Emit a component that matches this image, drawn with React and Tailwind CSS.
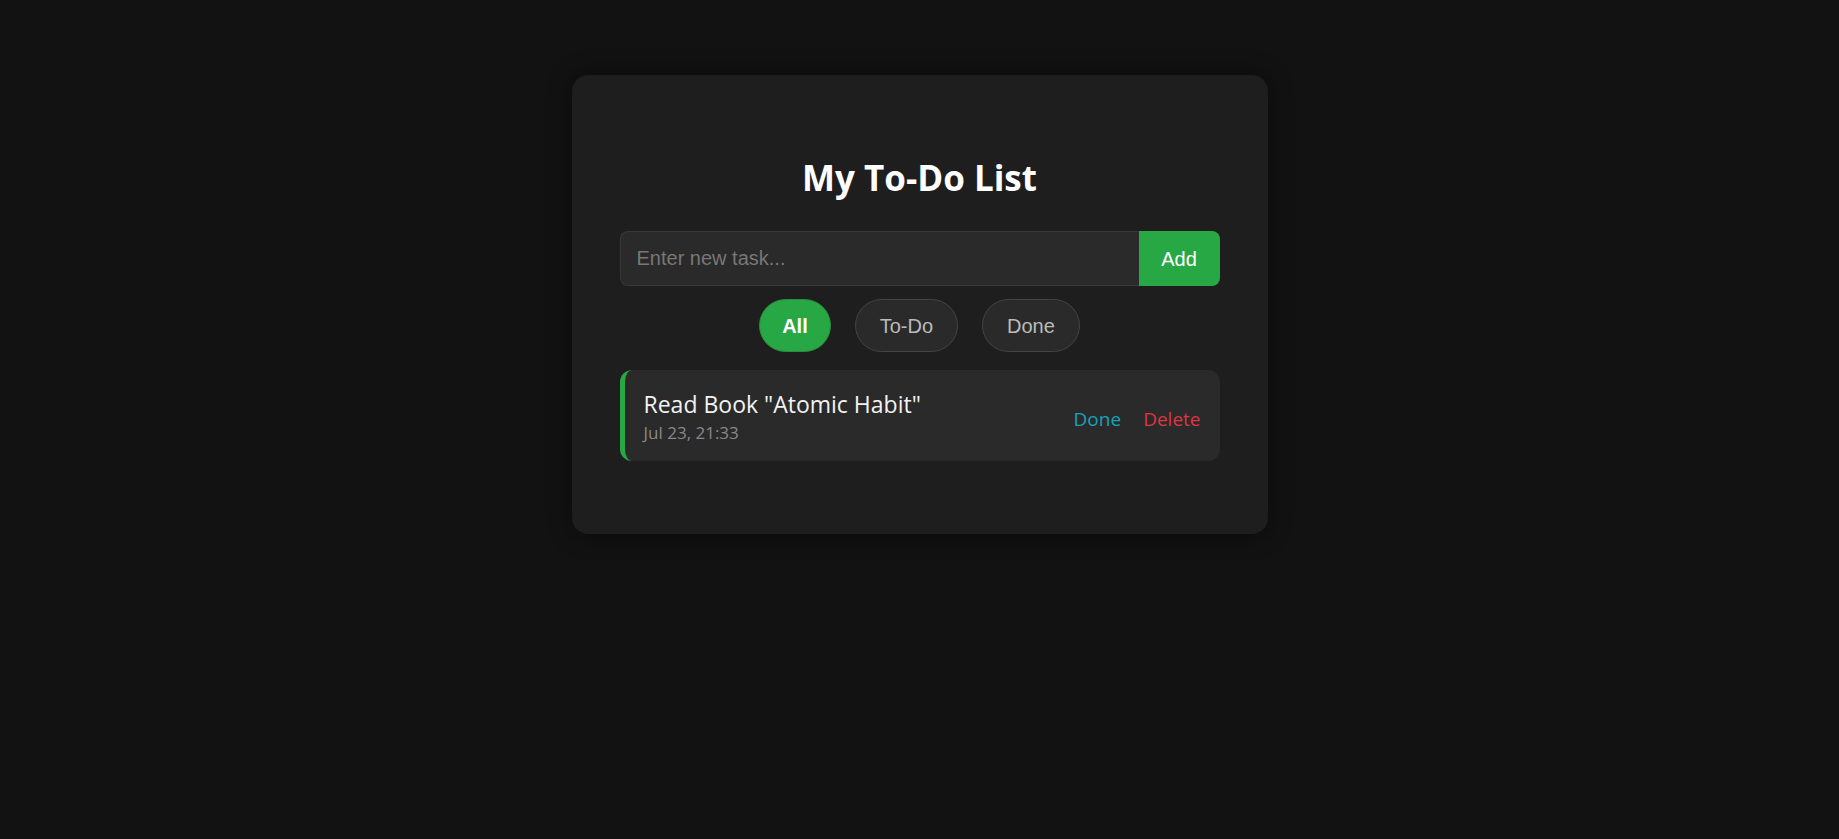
import { useState } from 'react'

// body copy uses a Segoe-like humanist face; form controls keep the Arial look
const uiFont = { fontFamily: '"Open Sans", "Noto Sans", sans-serif' }
const ctlFont = '[font-family:"Liberation_Sans",Arial,sans-serif]'

const FILTERS = ['All', 'To-Do', 'Done']

export default function App() {
  const [filter, setFilter] = useState('All')
  const [text, setText] = useState('')
  const [tasks, setTasks] = useState([
    { id: 1, title: 'Read Book "Atomic Habit"', when: 'Jul 23, 21:33', done: false },
  ])

  const add = () => {
    if (!text.trim()) return
    setTasks(t => [...t, { id: Date.now(), title: text.trim(), when: 'Jul 23, 21:33', done: false }])
    setText('')
  }

  const visible = tasks.filter(t => filter === 'All' || (filter === 'Done' ? t.done : !t.done))

  return (
    <div className="min-h-screen bg-[#121212] flex justify-center items-start pt-[75px]" style={uiFont}>
      <div className="w-[696px] bg-[#1e1e1e] rounded-2xl px-12 pt-12 pb-[73px] shadow-[0_0_24px_rgba(0,0,0,0.45)]">
        <h1 className="mt-[31px] mb-[29px] text-center text-[35px] leading-[48px] font-bold text-white">My To-Do List</h1>

        <div className="flex h-[55px]">
          <input
            value={text}
            onChange={e => setText(e.target.value)}
            onKeyDown={e => e.key === 'Enter' && add()}
            placeholder="Enter new task..."
            className={`flex-1 min-w-0 h-full bg-[#2a2a2a] border border-[#383838] border-r-0 rounded-l-lg pl-4 text-[20px] text-white placeholder:text-[#777] outline-none ${ctlFont}`}
          />
          <button onClick={add} className={`w-[81px] h-full bg-[#28a745] rounded-r-lg text-white text-[20px] ${ctlFont}`}>Add</button>
        </div>

        <div className="flex justify-center gap-6 mt-[13px]">
          {FILTERS.map(f => (
            <button
              key={f}
              onClick={() => setFilter(f)}
              className={`h-[53px] rounded-full border text-[20px] ${ctlFont} ${filter === f ? 'px-[22px] bg-[#28a745] border-[#2d8a3f] text-white font-bold' : 'px-[24px] bg-[#2a2a2a] border-[#444] text-[#bbb]'}`}
            >
              {f}
            </button>
          ))}
        </div>

        <ul className="mt-[18px] flex flex-col gap-3">
          {visible.map(t => (
            <li key={t.id} className="flex items-center justify-between bg-[#2a2a2a] border-l-[5px] border-[#28a745] rounded-xl pl-[19px] pr-[19px] pt-[19px] pb-[17px]">
              <div>
                <p className={`text-[23px] leading-[30px] ${t.done ? 'text-[#888] line-through' : 'text-[#f2f2f2]'}`}>{t.title}</p>
                <p className="mt-[2px] text-[17px] leading-[23px] text-[#888]">{t.when}</p>
              </div>
              <div className="flex gap-[22px] mt-[4px] text-[19px] leading-[26px]">
                <button onClick={() => setTasks(ts => ts.map(x => x.id === t.id ? { ...x, done: !x.done } : x))} className="text-[#17a2b8]">Done</button>
                <button onClick={() => setTasks(ts => ts.filter(x => x.id !== t.id))} className="text-[#dc3545]">Delete</button>
              </div>
            </li>
          ))}
        </ul>
      </div>
    </div>
  )
}
